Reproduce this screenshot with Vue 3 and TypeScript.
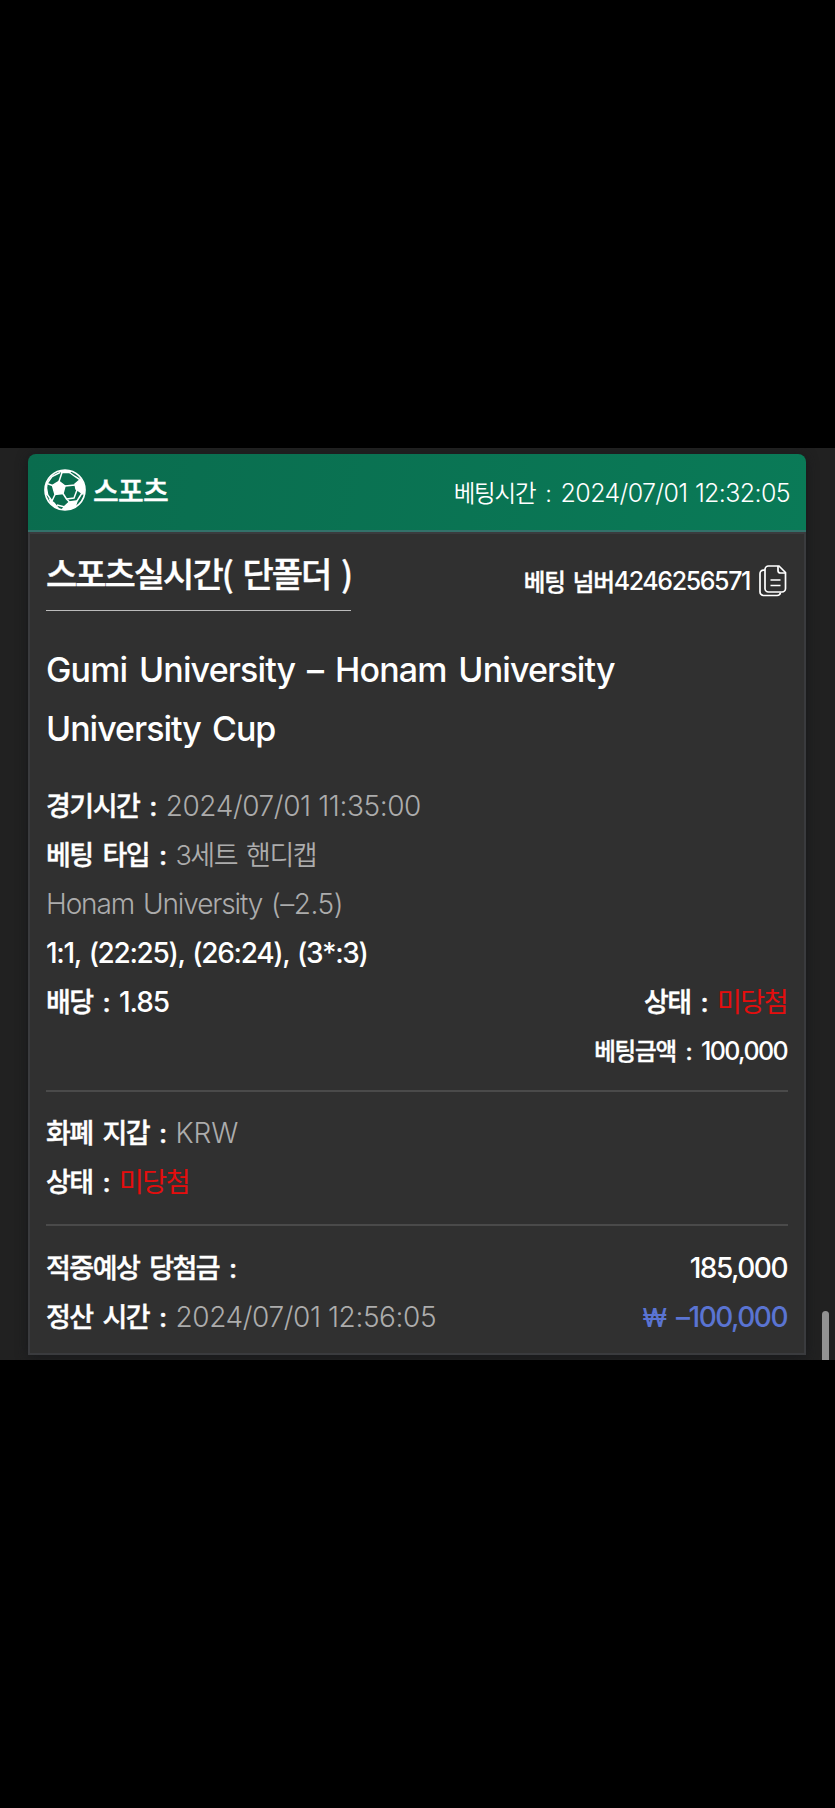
<script setup lang="ts">
interface Part {
  text: string
  cls?: string
}

const info: Part[][] = [
  [{ text: '경기시간 : ', cls: 'ko' }, { text: '2024/07/01 11:35:00', cls: 'num muted' }],
  [{ text: '베팅 타입 : ', cls: 'ko' }, { text: '3세트 핸디캡', cls: 'ko muted' }],
  [{ text: 'Honam University ', cls: 'latin muted' }, { text: '(–2.5)', cls: 'handicap muted' }],
  [{ text: '1:1, (22:25), (26:24), (3*:3)', cls: 'score' }],
]
</script>

<template>
  <main class="page">
    <section class="viewport">
      <article class="card">
        <header class="head">
          <div class="brand">
            <svg class="ball" viewBox="0 0 42 42">
              <defs><clipPath id="ballClip"><circle cx="21" cy="21" r="20" /></clipPath></defs>
              <g clip-path="url(#ballClip)" fill="#fff" stroke="#fff" stroke-width="1.5">
                <path d="M8.500 16.500 15 12.500l6 4.500-2 7.500-8 1z" />
                <path d="M14 1 28 1 25.500 3.500 18 3.500z" />
                <path d="M31 15 36.500 10.500l4.500 7.500-2 7-3.500-2.500-3.500-2.500z" />
                <path d="M21 37 25.500 33 33 32 31 38 27 42 18 41z" />
                <path d="M0 14 3 14.500 2.500 19 3.500 25 1 26z" />
                <path d="M6 31 10 34 14 39 8 38z" />
                <path d="M15 12.500 18 3.500M21 17 31 16M19 24.500 22.500 30 25.500 33M11 25.500 8 32M8.500 16.500 3 14.500M25.500 3.500 31 7.500 36.500 11M22.500 30 30 29 33 21M21 38 13 36M3 14.500 8 7.500 16 3.500M3 25 8 32M33 32 38 24" fill="none" />
              </g>
              <circle cx="21" cy="21" r="20" fill="none" stroke="#fff" stroke-width="1.700" />
            </svg>
            <span class="brand-name">스포츠</span>
          </div>
          <div class="bet-time"><span class="small-ko">베팅시간 : </span><span class="bt-value">2024/07/01 12:32:05</span></div>
        </header>
        <div class="body">
          <div class="title-row">
            <h1 class="title">스포츠실시간( 단폴더 )</h1>
            <div class="bet-id">
              <span class="small-ko strong">베팅 넘버</span><span class="id-value">4246256571</span>
              <svg class="copy" viewBox="0 0 28 32" fill="none" stroke="#fff" stroke-width="1.700">
                <path d="M6 5.200H4.500A3.500 3.500 0 0 0 1 8.700V27a3.500 3.500 0 0 0 3.500 3.500H18a3.500 3.500 0 0 0 3.500-3" />
                <path d="M9.500 1H20l6.500 6.500V23.500a3.500 3.500 0 0 1-3.500 3.500H9.500A3.500 3.500 0 0 1 6 23.500V4.500A3.500 3.500 0 0 1 9.500 1z" />
                <path d="M19 1V5.500A2.500 2.500 0 0 0 21.500 8H26.500M11.500 15H21.500M11.500 20.500H21.500" />
              </svg>
            </div>
          </div>
          <div class="match">
            <div>Gumi University – Honam University</div>
            <div class="league">University Cup</div>
          </div>
          <div v-for="(row, i) in info" :key="i" class="row">
            <p><span v-for="(p, j) in row" :key="j" :class="p.cls">{{ p.text }}</span></p>
          </div>
          <div class="row">
            <p><span class="ko">배당 : </span><span class="odds">1.85</span></p>
            <p class="right"><span class="ko">상태 : </span><span class="ko lost">미당첨</span></p>
          </div>
          <div class="row end">
            <p class="right"><span class="small-ko strong">베팅금액 : </span><span class="amt">100,000</span></p>
          </div>
          <hr class="rule first" />
          <div class="row"><p><span class="ko">화폐 지갑 : </span><span class="krw muted">KRW</span></p></div>
          <div class="row"><p><span class="ko">상태 : </span><span class="ko lost">미당첨</span></p></div>
          <hr class="rule second" />
          <div class="row">
            <p><span class="ko">적중예상 당첨금 :</span></p>
            <p class="right"><span class="total">185,000</span></p>
          </div>
          <div class="row">
            <p><span class="ko">정산 시간 : </span><span class="num muted">2024/07/01 12:56:05</span></p>
            <p class="right loss"><span class="won">₩</span><span class="total">–100,000</span></p>
          </div>
        </div>
      </article>
      <div class="scrollbar"></div>
    </section>
  </main>
</template>

<style>
html,
body {
  background: #000;
}
</style>

<style scoped>
.page {
  box-sizing: border-box;
  width: 835px;
  height: 1808px;
  padding-top: 448px;
  background: #000;
  color: #fff;
  font-family: Inter, 'Noto Sans CJK KR', sans-serif;
  font-weight: 500;
}
.viewport {
  position: relative;
  box-sizing: border-box;
  height: 912px;
  padding: 6px 29px 0 28px;
  background: #212121;
  overflow: hidden;
}
.card {
  border-radius: 8px 8px 0 0;
  box-shadow: 0 2px 12px #17181b;
}
.head {
  display: flex;
  align-items: center;
  justify-content: space-between;
  box-sizing: border-box;
  height: 78px;
  padding: 0 16px;
  border-radius: 8px 8px 0 0;
  border-bottom: 2px solid #33716a;
  background: linear-gradient(100deg, #0a6c4e, #0a7a57);
}
.brand {
  display: flex;
  align-items: center;
  height: 40px;
  margin-top: -4px;
}
.ball {
  width: 42px;
  height: 42px;
}
.brand-name {
  margin-left: 7px;
  font: 500 28px/40px 'Noto Sans CJK KR', sans-serif;
  letter-spacing: -0.8px;
  -webkit-text-stroke: 0.4px currentColor;
}
.bet-time {
  padding-top: 3px;
  font-size: 25px;
  line-height: 40px;
  font-weight: 350;
  white-space: pre;
}
.bt-value {
  letter-spacing: -0.62px;
  word-spacing: 1px;
}
.small-ko {
  font-size: 23.5px;
  letter-spacing: -1.2px;
  word-spacing: 4.5px;
}
.body {
  box-sizing: border-box;
  height: 823px;
  padding: 0 16px;
  border: 2px solid #3a3b3e;
  background: #303030;
}
.title-row {
  display: flex;
  justify-content: space-between;
  height: 78px;
}
.title {
  box-sizing: border-box;
  height: 77px;
  margin: 0;
  padding-top: 12px;
  border-bottom: 1px solid #bbb;
  font: 500 34px/54px 'Noto Sans CJK KR', sans-serif;
  letter-spacing: -2px;
  word-spacing: 5px;
  -webkit-text-stroke: 0.4px currentColor;
}
.bet-id {
  display: flex;
  align-items: center;
  height: 32px;
  padding-top: 31px;
  font-size: 25px;
}
.bet-id .small-ko {
  word-spacing: 3.2px;
}
.id-value {
  letter-spacing: -1.4px;
}
.copy {
  width: 28px;
  height: 32px;
  margin: 0 1px 0 9px;
}
.match {
  padding: 28px 0 24px;
  font-size: 34px;
  line-height: 59px;
  letter-spacing: -0.86px;
  word-spacing: 3.6px;
}
.league {
  letter-spacing: -1px;
  word-spacing: 3px;
}
.row {
  display: flex;
  justify-content: space-between;
  height: 49px;
  line-height: 49px;
  font-size: 28px;
  white-space: pre;
}
.row.end {
  justify-content: flex-end;
  height: 48px;
  line-height: 47px;
}
p {
  margin: 0;
}
.right {
  margin-right: 1px;
}
.ko {
  font-size: 27px;
  letter-spacing: -1.5px;
  word-spacing: 4.1px;
  -webkit-text-stroke: 0.4px currentColor;
}
.strong {
  -webkit-text-stroke: 0.4px currentColor;
}
.muted {
  color: #acacac;
  font-weight: 350;
  -webkit-text-stroke: 0;
}
.ko.muted {
  word-spacing: 3px;
}
.lost {
  color: #e50d0d;
  font-weight: 400;
  -webkit-text-stroke: 0;
}
.num {
  letter-spacing: -0.4px;
}
.latin {
  letter-spacing: -1.1px;
  word-spacing: 2px;
}
.handicap {
  letter-spacing: -0.5px;
}
.score {
  letter-spacing: -1.35px;
  word-spacing: 2px;
}
.odds {
  letter-spacing: -1.1px;
}
.amt {
  font-size: 25px;
  letter-spacing: -1.6px;
}
.total {
  letter-spacing: -1.5px;
}
.loss {
  color: #5a74d2;
}
.won {
  margin-right: 9px;
  font-size: 25px;
  line-height: 1;
}
.rule {
  height: 2px;
  margin: 15px 0 17px;
  border: 0;
  background: #4a4a4a;
}
.rule.second {
  margin: 17px 0 18px;
}
.scrollbar {
  position: absolute;
  left: 822px;
  top: 863px;
  width: 7px;
  height: 60px;
  border-radius: 4px;
  background: #929292;
}
</style>
